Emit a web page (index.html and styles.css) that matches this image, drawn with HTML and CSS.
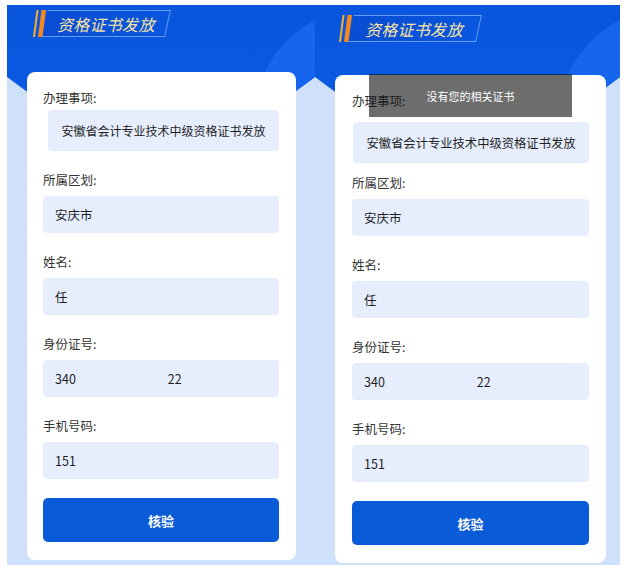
FILE: index.html
```html
<!DOCTYPE html>
<html lang="zh-CN">
<head>
<meta charset="utf-8">
<title>资格证书发放</title>
<link rel="stylesheet" href="styles.css">
</head>
<body>
<div class="page">
  <section class="phone phone-a">
    <header class="hd">
      <div class="title">
        <svg class="bars" viewBox="0 0 14 27" width="14" height="27"><polygon points="3.5,0 5.5,0 2,27 0,27" fill="#f7b02a"/><polygon points="8.5,0 13,0 9.5,27 5,27" fill="#f5881d"/></svg>
        <div class="tbox"><span>资格证书发放</span></div>
      </div>
    </header>
    <div class="card">
      <div class="lbl">办理事项:</div>
      <div class="fld fld-main">安徽省会计专业技术中级资格证书发放</div>
      <div class="lbl">所属区划:</div>
      <div class="fld">安庆市</div>
      <div class="lbl">姓名:</div>
      <div class="fld">任</div>
      <div class="lbl">身份证号:</div>
      <div class="fld"><span>340</span><span class="tail">22</span></div>
      <div class="lbl">手机号码:</div>
      <div class="fld">151</div>
      <button class="btn" type="button">核验</button>
    </div>
  </section>
  <section class="phone phone-b">
    <header class="hd">
      <div class="title">
        <svg class="bars" viewBox="0 0 14 27" width="14" height="27"><polygon points="3.5,0 5.5,0 2,27 0,27" fill="#f7b02a"/><polygon points="8.5,0 13,0 9.5,27 5,27" fill="#f5881d"/></svg>
        <div class="tbox"><span>资格证书发放</span></div>
      </div>
    </header>
    <div class="card">
      <div class="lbl">办理事项:</div>
      <div class="fld fld-main">安徽省会计专业技术中级资格证书发放</div>
      <div class="lbl">所属区划:</div>
      <div class="fld">安庆市</div>
      <div class="lbl">姓名:</div>
      <div class="fld">任</div>
      <div class="lbl">身份证号:</div>
      <div class="fld"><span>340</span><span class="tail">22</span></div>
      <div class="lbl">手机号码:</div>
      <div class="fld">151</div>
      <button class="btn" type="button">核验</button>
    </div>
    <div class="toast">没有您的相关证书</div>
  </section>
</div>
</body>
</html>
```
FILE: styles.css
```css
html, body {
  margin: 0;
  background: #ffffff;
  font-family: "Noto Sans CJK SC", "Noto Sans", sans-serif;
}

.page {
  display: flex;
  padding: 5px 0 0 7px;
}

.phone {
  position: relative;
  height: 560px;
  background: #cfe0fb;
  overflow: hidden;
}

.phone-a { width: 308px; }
.phone-b { width: 305px; }

.phone::before {
  content: "";
  position: absolute;
  left: 0;
  top: 0;
  right: 0;
  height: 200px;
  background:
    radial-gradient(circle at 118% 120px, #1565ee 0 118px, transparent 119px),
    linear-gradient(180deg, #0955dd 0%, #0c5fe8 100%);
  clip-path: polygon(0 0, 100% 0, 100% 72px, 50% 185px, 0 72px);
}

.hd {
  position: relative;
  box-sizing: border-box;
  height: 67px;
  padding: 5px 0 0 26px;
}

.phone-b .hd {
  height: 70px;
  padding: 10px 0 0 24px;
}

.title {
  display: flex;
  align-items: center;
  height: 27px;
}

.bars {
  display: block;
  flex: none;
}

.tbox {
  box-sizing: border-box;
  width: 123px;
  height: 27px;
  margin-left: -2px;
  padding-left: 12px;
  display: flex;
  align-items: center;
  border: 1px solid rgba(140, 190, 255, 0.7);
  border-left: 0;
  transform: skewX(-12deg);
  background: linear-gradient(90deg, rgba(8, 60, 190, 0.35), rgba(8, 60, 190, 0));
}

.phone-b .tbox { width: 128px; padding-left: 14px; }

.tbox span {
  transform: skewX(12deg);
  font-style: italic;
  font-size: 16px;
  letter-spacing: 0.3px;
  color: #f7e4a2;
}

.card {
  position: relative;
  background: #ffffff;
  border-radius: 8px;
  margin: 0 19px 0 20px;
  padding: 18px 17px 18px 16px;
}

.phone-b .card {
  margin: 0 14px 0 20px;
  padding: 18px 17px 18px 17px;
}

.lbl {
  height: 16px;
  line-height: 16px;
  margin-top: 21px;
  font-size: 12.5px;
  color: #333333;
}

.lbl:first-child { margin-top: 0; }

.fld {
  box-sizing: border-box;
  height: 37px;
  margin-top: 8px;
  padding-left: 12px;
  display: flex;
  align-items: center;
  border-radius: 4px;
  background: #e6eefd;
  font-size: 12.5px;
  color: #1f1f1f;
}

.fld-main {
  height: 41px;
  margin: 4px 0 0 5px;
  padding: 0;
  justify-content: center;
  font-size: 12px;
}

.phone-b .fld-main {
  margin: 13px 0 0 1px;
  font-size: 12.3px;
}

.phone-b .fld-main + .lbl { margin-top: 12px; }

.tail { margin-left: 92px; }

.btn {
  display: block;
  width: 100%;
  height: 44px;
  margin-top: 19px;
  border: 0;
  border-radius: 5px;
  background: #0a5bd7;
  color: #ffffff;
  font-family: "Noto Sans CJK SC", "Noto Sans", sans-serif;
  font-size: 13px;
  font-weight: 700;
}

.toast {
  position: absolute;
  left: 54px;
  top: 69px;
  width: 203px;
  height: 43px;
  display: flex;
  align-items: center;
  justify-content: center;
  background: rgba(20, 20, 20, 0.62);
  color: #ffffff;
  font-size: 11px;
}
```
